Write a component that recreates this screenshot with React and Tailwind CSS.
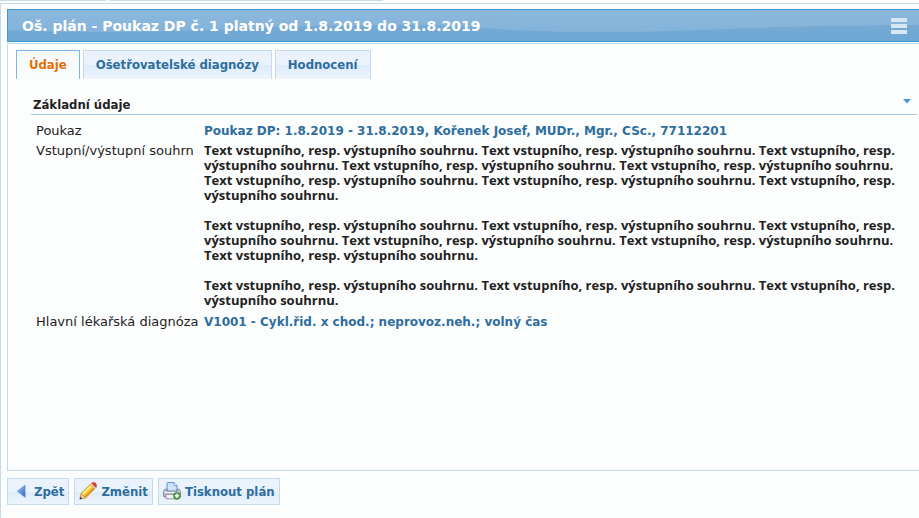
import React, { useState } from 'react';

const tabs = ['Údaje', 'Ošetřovatelské diagnózy', 'Hodnocení'];

const summary = [
  [
    'Text vstupního, resp. výstupního souhrnu. Text vstupního, resp. výstupního souhrnu. Text vstupního, resp.',
    'výstupního souhrnu. Text vstupního, resp. výstupního souhrnu. Text vstupního, resp. výstupního souhrnu.',
    'Text vstupního, resp. výstupního souhrnu. Text vstupního, resp. výstupního souhrnu. Text vstupního, resp.',
    'výstupního souhrnu.',
  ],
  [
    'Text vstupního, resp. výstupního souhrnu. Text vstupního, resp. výstupního souhrnu. Text vstupního, resp.',
    'výstupního souhrnu. Text vstupního, resp. výstupního souhrnu. Text vstupního, resp. výstupního souhrnu.',
    'Text vstupního, resp. výstupního souhrnu.',
  ],
  [
    'Text vstupního, resp. výstupního souhrnu. Text vstupního, resp. výstupního souhrnu. Text vstupního, resp.',
    'výstupního souhrnu.',
  ],
];

const BackIcon = () => (
  <svg width="18" height="18" viewBox="0 0 18 18" aria-hidden="true">
    <defs>
      <linearGradient id="back" x1="0" y1="0" x2="1" y2="1">
        <stop offset="0" stopColor="#a9c6f3" />
        <stop offset="1" stopColor="#2f62c4" />
      </linearGradient>
    </defs>
    <path d="M13.2 3v12.4L5 9.2z" fill="url(#back)" stroke="#6f9be0" strokeWidth="0.6" />
  </svg>
);

const PencilIcon = () => (
  <svg width="18" height="18" viewBox="0 0 18 18" aria-hidden="true">
    <path d="M0.8 17.2L2 11.4L6.6 15.9z" fill="#f3d9ac" stroke="#a8743a" strokeWidth="0.6" />
    <path d="M0.8 17.2l0.6-2.6 2 1.9z" fill="#4a3426" />
    <path d="M2 11.4L11.2 2.4L15.8 6.9L6.6 15.9z" fill="#f9c52c" stroke="#c47a18" strokeWidth="0.7" />
    <path d="M3 11.6L11.6 3.2L13 4.6L4.5 13z" fill="#fff08a" />
    <path d="M5.6 14.2L14.2 5.8L15.2 6.8L6.6 15.2z" fill="#e88f15" />
    <path d="M11.2 2.4L12.5 1.1L17 5.6L15.8 6.9z" fill="#e6e1dc" stroke="#a0968e" strokeWidth="0.4" />
    <path d="M12.5 1.1Q14.6 -0.2 16.6 1.3Q18.3 3.3 17 5.6z" fill="#e63b22" stroke="#b62a18" strokeWidth="0.5" />
  </svg>
);

const PrinterIcon = () => (
  <svg width="18" height="18" viewBox="0 0 18 18" aria-hidden="true">
    <path d="M4 9V1.5Q4 0.6 5 0.6H11L14 3.6V9z" fill="#cfe2fb" stroke="#5f8fd0" />
    <path d="M11 0.8V3.7H14" fill="#eef5ff" stroke="#5f8fd0" strokeWidth="0.8" />
    <path d="M3 7H4V9.5H14V7h1Q17.4 7.4 17.4 10V14.8H0.6V10Q0.6 7.4 3 7z" fill="#b9bdc5" stroke="#7c828d" strokeWidth="0.9" />
    <path d="M1.2 10.4h15.6" stroke="#f1f2f5" strokeWidth="1.4" />
    <path d="M3 12.4h12v4.4H3z" fill="#eef2f8" stroke="#7f8590" strokeWidth="0.8" />
    <circle cx="14" cy="13.8" r="3.6" fill="#5a9e4a" stroke="#3d7a35" strokeWidth="0.6" />
    <path d="M14 11.7v4.2M11.9 13.8h4.2" stroke="#fff" strokeWidth="1.4" />
  </svg>
);

const actions = [
  { label: 'Zpět', icon: <BackIcon /> },
  { label: 'Změnit', icon: <PencilIcon /> },
  { label: 'Tisknout plán', icon: <PrinterIcon /> },
];

const HeaderGloss = () => (
  <svg className="absolute inset-0 w-full h-full" aria-hidden="true">
    <defs>
      <linearGradient id="gloss" x1="0" y1="0" x2="0" y2="1">
        <stop offset="0" stopColor="#76aad3" />
        <stop offset="1" stopColor="#6da8d4" />
      </linearGradient>
      <pattern id="wave" width="500" height="31" patternUnits="userSpaceOnUse">
        <path d="M0 20C30 21 60 22 100 22C190 22 230 16 400 15C440 15 470 17 500 20V31H0z" fill="url(#gloss)" />
      </pattern>
    </defs>
    <rect width="100%" height="100%" fill="url(#wave)" />
  </svg>
);

const CarePlan = () => {
  const [activeTab, setActiveTab] = useState('Údaje');
  const [open, setOpen] = useState(true);

  return (
    <div className="min-h-screen flex flex-col overflow-x-hidden bg-[#fcfdfd] font-['Verdana','DejaVu_Sans',sans-serif] text-[12px] leading-[15px] text-[#222222]">
      <div className="flex gap-[3px] mb-[2px]">
        <div className="w-[106px] h-px bg-[#c5dbec]" />
        <div className="w-[274px] h-px bg-[#c5dbec]" />
      </div>
      <main className="flex-1 flex flex-col border-l border-t border-[#c5dbec] pl-[6px] pt-[5px]">
        <header className="relative flex items-center justify-between h-[33px] pl-[14px] pr-[12px] border border-r-0 border-[#4297d7] bg-linear-to-b from-[#8cb8dd] to-[#80b1d8] text-white">
          <HeaderGloss />
          <h1 className="relative text-[14px] leading-[18px] font-bold whitespace-nowrap">
            Oš. plán - Poukaz DP č. 1 platný od 1.8.2019 do 31.8.2019
          </h1>
          <button type="button" aria-label="Menu" className="relative flex flex-col gap-[2px]">
            <span className="w-4 h-[4px] bg-[#d8e7f5]" />
            <span className="w-4 h-[4px] bg-[#d8e7f5]" />
            <span className="w-4 h-[4px] bg-[#d8e7f5]" />
          </button>
        </header>

        <section className="mt-px min-h-[428px] border border-r-0 border-[#c5dbec] pl-2 pt-[6px]">
          <nav className="flex gap-[3px] font-['DejaVu_Sans_Condensed','DejaVu_Sans',sans-serif] text-[13px]">
            {tabs.map((tab) => (
              <button
                key={tab}
                type="button"
                onClick={() => setActiveTab(tab)}
                className={
                  tab === activeTab
                    ? 'h-[29px] px-3 pb-[2px] border border-b-0 border-[#79b7e7] bg-linear-to-b from-[#f5f8f9] to-[#fcfdfd] font-bold text-[#e17009]'
                    : 'h-[29px] px-3 pb-[2px] border border-b-0 border-[#c5dbec] bg-linear-to-b from-[#eaf2fc] from-50% via-[#ddecfa] via-50% to-[#edf5fc] font-bold text-[#2e6e9e]'
                }
              >
                {tab}
              </button>
            ))}
          </nav>

          <div className="pl-[15px] pr-[2px] pt-[18px]">
            <div className="flex items-start justify-between h-[18px] pl-[2px] pr-[6px] border-b border-[#a6c9e2]">
              <h2 className="font-['DejaVu_Sans_Condensed','DejaVu_Sans',sans-serif] text-[13px] font-bold">Základní údaje</h2>
              <button type="button" aria-label="Sbalit" onClick={() => setOpen(!open)} className="flex pt-[2px]">
                <svg width="8" height="5" viewBox="0 0 8 5">
                  <path d="M0 0h8L4 4.6z" fill="#469bdd" />
                </svg>
              </button>
            </div>

            {open && (
              <table className="mt-2 ml-[5px] w-[880px] table-fixed text-left">
                <tbody>
                  <tr>
                    <th scope="row" className="w-[168px] pb-[4px] text-[13px] font-normal align-top whitespace-nowrap">Poukaz</th>
                    <td className="pt-px pb-[4px] font-bold text-[#2e6e9e] align-top whitespace-nowrap">
                      Poukaz DP: 1.8.2019 - 31.8.2019, Kořenek Josef, MUDr., Mgr., CSc., 77112201
                    </td>
                  </tr>
                  <tr>
                    <th scope="row" className="pb-[5px] text-[13px] font-normal align-top whitespace-nowrap">Vstupní/výstupní souhrn</th>
                    <td className="pb-[5px] font-['Open_Sans',sans-serif] text-[13px] font-bold align-top whitespace-nowrap">
                      {summary.map((lines, i) => (
                        <p key={i} className="mb-[15px] last:mb-0">
                          {lines.map((line) => (
                            <React.Fragment key={line}>
                              {line}
                              <br />
                            </React.Fragment>
                          ))}
                        </p>
                      ))}
                    </td>
                  </tr>
                  <tr>
                    <th scope="row" className="pt-px text-[13px] font-normal align-top whitespace-nowrap">Hlavní lékařská diagnóza</th>
                    <td className="pt-[2px] font-bold text-[#2e6e9e] align-top whitespace-nowrap">
                      V1001 - Cykl.řid. x chod.; neprovoz.neh.; volný čas
                    </td>
                  </tr>
                </tbody>
              </table>
            )}
          </div>
        </section>

        <footer className="flex gap-[5px] pt-[7px] font-['DejaVu_Sans_Condensed','DejaVu_Sans',sans-serif] text-[13px]">
          {actions.map(({ label, icon }) => (
            <button
              key={label}
              type="button"
              className="flex items-center gap-1 h-[27px] px-1 pb-px border border-[#c5dbec] bg-linear-to-b from-[#eaf2fc] from-50% via-[#ddecfa] via-50% to-[#edf5fc] font-bold text-[#2e6e9e]"
            >
              {icon}
              {label}
            </button>
          ))}
        </footer>
      </main>
    </div>
  );
};

export default CarePlan;
